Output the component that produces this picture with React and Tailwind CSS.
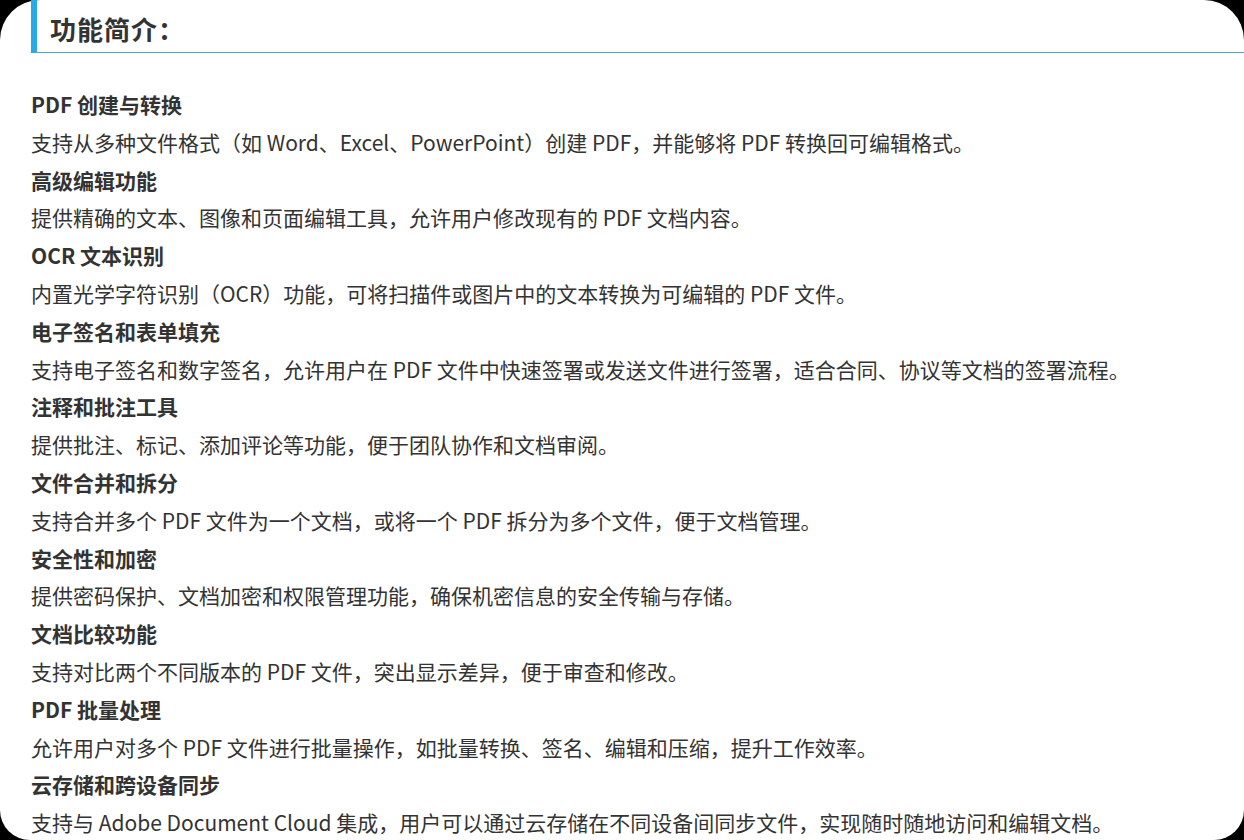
const items = [
  ["PDF 创建与转换", "支持从多种文件格式（如 Word、Excel、PowerPoint）创建 PDF，并能够将 PDF 转换回可编辑格式。"],
  ["高级编辑功能", "提供精确的文本、图像和页面编辑工具，允许用户修改现有的 PDF 文档内容。"],
  ["OCR 文本识别", "内置光学字符识别（OCR）功能，可将扫描件或图片中的文本转换为可编辑的 PDF 文件。"],
  ["电子签名和表单填充", "支持电子签名和数字签名，允许用户在 PDF 文件中快速签署或发送文件进行签署，适合合同、协议等文档的签署流程。"],
  ["注释和批注工具", "提供批注、标记、添加评论等功能，便于团队协作和文档审阅。"],
  ["文件合并和拆分", "支持合并多个 PDF 文件为一个文档，或将一个 PDF 拆分为多个文件，便于文档管理。"],
  ["安全性和加密", "提供密码保护、文档加密和权限管理功能，确保机密信息的安全传输与存储。"],
  ["文档比较功能", "支持对比两个不同版本的 PDF 文件，突出显示差异，便于审查和修改。"],
  ["PDF 批量处理", "允许用户对多个 PDF 文件进行批量操作，如批量转换、签名、编辑和压缩，提升工作效率。"],
  ["云存储和跨设备同步", "支持与 Adobe Document Cloud 集成，用户可以通过云存储在不同设备间同步文件，实现随时随地访问和编辑文档。"],
];
export default function App() {
  return (
    <div className="w-[1244px] h-[840px] bg-black overflow-hidden">
      <div className="w-full h-full bg-white rounded-t-[40px] rounded-b-[30px] text-[#333]" style={{fontFamily: '"Microsoft YaHei","Noto Sans CJK SC",sans-serif'}}>
        <div className="ml-[31px] h-[53px] border-l-[6px] border-[#29a9e6] border-b border-b-[#45a8d8] flex items-center pl-[13px] pt-[4px]">
          <h2 className="text-[26px] font-bold tracking-[1px]">功能简介：</h2>
        </div>
        <div className="pl-[31px] pt-[33px] text-[21px] leading-[37.8px]">
          {items.map(([t, d]) => (
            <div key={t}>
              <div className="font-bold">{t}</div>
              <div>{d}</div>
            </div>
          ))}
        </div>
      </div>
    </div>
  );
}
